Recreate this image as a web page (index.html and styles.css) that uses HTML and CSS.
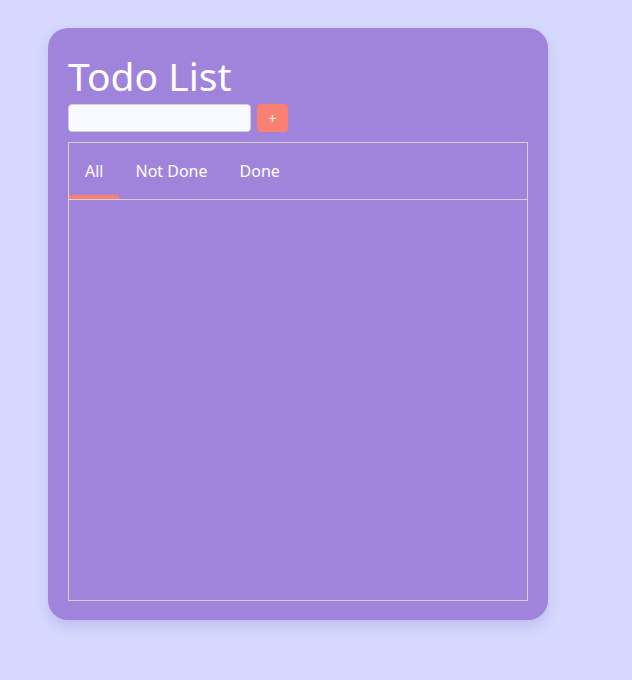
FILE: index.html
```html
<!DOCTYPE html>
<html lang="en">
<head>
<meta charset="utf-8">
<title>Todo List</title>
<link rel="stylesheet" href="styles.css">
</head>
<body>
  <main class="card">
    <h1 class="title">Todo List</h1>
    <div class="add-row">
      <input class="task-input" type="text">
      <button class="add-btn">+</button>
    </div>
    <section class="tabs-box">
      <nav class="tabs">
        <div class="tab active">All</div>
        <div class="tab">Not Done</div>
        <div class="tab">Done</div>
      </nav>
      <div class="task-list"></div>
    </section>
  </main>
</body>
</html>
```
FILE: styles.css
```css
html, body {
  margin: 0;
  padding: 0;
}
body {
  background: #d6d9fd;
  font-family: "Noto Sans", "Noto Sans CJK KR", sans-serif;
  padding: 28px 0 0 48px;
  height: 680px;
  box-sizing: border-box;
}
.card {
  width: 500px;
  height: 592px;
  box-sizing: border-box;
  background: #a084dc;
  border-radius: 20px;
  padding: 20px 20px 19px;
  box-shadow: 0 6px 12px rgba(120, 110, 200, 0.25);
  display: flex;
  flex-direction: column;
}
.title {
  margin: 0;
  color: #ffffff;
  font-weight: 400;
  font-size: 39px;
  line-height: 56px;
  height: 56px;
}
.add-row {
  display: flex;
  gap: 6px;
}
.task-input {
  width: 183px;
  height: 28px;
  box-sizing: border-box;
  border: 1px solid #cfcfe0;
  border-radius: 4px;
  background: #f8faff;
  padding: 0 6px;
  margin: 0;
}
.add-btn {
  width: 31px;
  height: 28px;
  border: none;
  border-radius: 4px;
  background: #fa8072;
  color: #ffffff;
  font-family: "Noto Sans", sans-serif;
  font-size: 14px;
  padding: 0;
  margin: 0;
}
.tabs-box {
  margin-top: 10px;
  border: 1px solid #d3d3d3;
  flex: 1;
  display: flex;
  flex-direction: column;
}
.tabs {
  display: flex;
  height: 57px;
  border-bottom: 1px solid #d3d3d3;
  box-sizing: border-box;
}
.tab {
  padding: 4px 16px 0;
  color: #ffffff;
  font-size: 16px;
  display: flex;
  align-items: center;
  box-sizing: border-box;
  border-bottom: 4px solid transparent;
}
.tab.active {
  border-bottom-color: #fa8072;
}
.task-list {
  flex: 1;
}
```
